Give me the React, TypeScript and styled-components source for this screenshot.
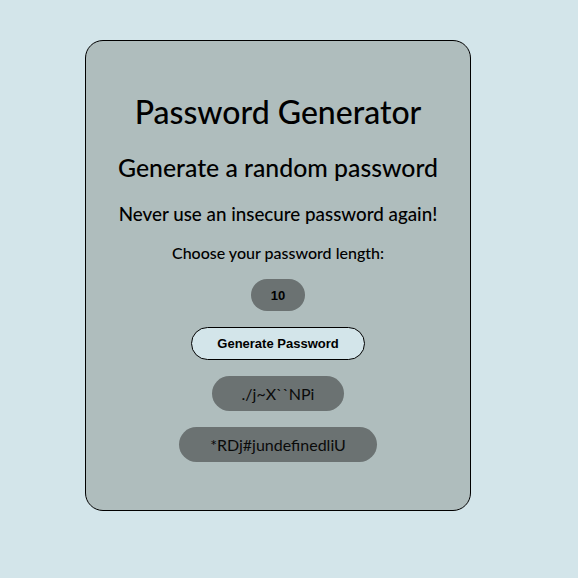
import React from "react";
import styled, { createGlobalStyle } from "styled-components";

const Global = createGlobalStyle`
  html, body { margin: 0; padding: 0; background: #d3e5ea; }
  body { font-family: "Lato", "Noto Sans", sans-serif; color: #000; }
`;

const Page = styled.div`
  padding: 40px 0 0 85px;
`;

const Card = styled.main`
  box-sizing: border-box;
  width: 386px;
  height: 471px;
  background: #afbdbd;
  border: 1px solid #000;
  border-radius: 18px;
  padding-top: 52px;
  display: flex;
  flex-direction: column;
  align-items: center;
`;

const Title = styled.h1`
  margin: 0;
  font-size: 32px;
  line-height: 38px;
  font-weight: 500;
`;

const Subtitle = styled.h2`
  margin: 23px 0 0;
  font-size: 24.8px;
  line-height: 28px;
  font-weight: 500;
`;

const Tagline = styled.p`
  margin: 21px 0 0;
  font-size: 18.8px;
  line-height: 22px;
  font-weight: 500;
`;

const Label = styled.label`
  margin-top: 18px;
  font-size: 16px;
  line-height: 20px;
  font-weight: 500;
`;

const Pill = styled.div<{ $h: number; $px: number }>`
  margin-top: 16px;
  box-sizing: border-box;
  height: ${(p) => p.$h}px;
  padding: 0 ${(p) => p.$px}px;
  display: flex;
  align-items: center;
  justify-content: center;
  border-radius: 999px;
  background: #6b7272;
`;

const LengthText = styled.span`
  font-family: "Liberation Sans", Arial, sans-serif;
  font-weight: 700;
  font-size: 13px;
`;

const PasswordText = styled.span`
  font-size: 16px;
  color: #0a0a0a;
`;

const GenerateButton = styled.button`
  margin-top: 16px;
  box-sizing: border-box;
  width: 174px;
  height: 33px;
  border: 1px solid #000;
  border-radius: 999px;
  background: #d3e5ea;
  font-family: "Liberation Sans", Arial, sans-serif;
  font-weight: 700;
  font-size: 13px;
  color: #000;
`;

export default function App() {
  return (
    <>
      <Global />
      <Page>
        <Card>
          <Title>Password Generator</Title>
          <Subtitle>Generate a random password</Subtitle>
          <Tagline>Never use an insecure password again!</Tagline>
          <Label>Choose your password length:</Label>
          <Pill $h={32} $px={20}>
            <LengthText>10</LengthText>
          </Pill>
          <GenerateButton>Generate Password</GenerateButton>
          <Pill $h={35} $px={30}>
            <PasswordText>./j~X``NPi</PasswordText>
          </Pill>
          <Pill $h={35} $px={31}>
            <PasswordText>*RDj#jundefinedliU</PasswordText>
          </Pill>
        </Card>
      </Page>
    </>
  );
}
